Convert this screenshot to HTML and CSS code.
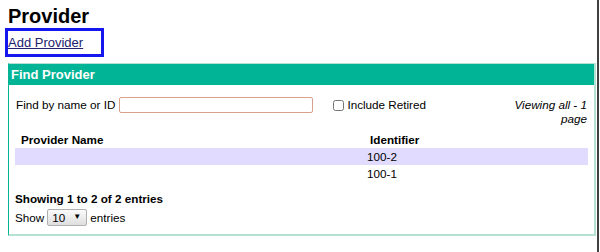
FILE: index.html
```html
<!DOCTYPE html>
<html lang="en">
<head>
    <meta charset="UTF-8">
    <title>Manage Providers</title>
    <link rel="stylesheet" href="styles.css">
</head>
<body>
    <h1>Provider</h1>
    <a class="add-link" href="#">Add Provider</a>

    <div class="box">
        <div class="box-header">Find Provider</div>
        <div class="box-body">
            <div class="search-row">
                <label for="inputNode">Find by name or ID</label>
                <input type="text" id="inputNode" class="search-input">
                <label class="retired"><input type="checkbox" class="check"> Include Retired</label>
                <div class="viewing">Viewing all - 1 page</div>
            </div>

            <table class="results">
                <thead>
                    <tr>
                        <th class="col-name">Provider Name</th>
                        <th>Identifier</th>
                    </tr>
                </thead>
                <tbody>
                    <tr class="odd">
                        <td></td>
                        <td>100-2</td>
                    </tr>
                    <tr>
                        <td></td>
                        <td>100-1</td>
                    </tr>
                </tbody>
            </table>

            <div class="info">Showing 1 to 2 of 2 entries</div>
            <div class="length">
                Show
                <span class="select-wrap">
                    <select class="length-select">
                        <option>10</option>
                        <option>25</option>
                        <option>50</option>
                    </select>
                </span>
                entries
            </div>
        </div>
    </div>
</body>
</html>
```

FILE: styles.css
```css
/* Page */
html {
    background: #fff;
}

body {
    font-family: "Liberation Sans", Arial, sans-serif;
    font-size: 13px;
    color: #000;
    margin: 0 1px 0 0;
    padding: 5px 0 0 8px;
    min-height: 100vh;
    box-sizing: border-box;
    border-right: 2px solid #404040;
}

h1 {
    font-size: 20px;
    line-height: 23px;
    margin: 0 0 3px 0;
}

/* Link with focus ring */
.add-link {
    display: inline-block;
    line-height: 23px;
    padding-right: 18px;
    color: #22226e;
    outline: 3px solid #1616ee;
}

/* Box */
.box {
    width: 588px;
    box-sizing: border-box;
    margin-top: 9px;
    border-top: 1px solid #b6e0d3;
    border-left: 1px solid #00b495;
    border-right: 2px solid #b6e0d3;
    border-bottom: 2px solid #b6e0d3;
}

.box-header {
    background-color: #00b495;
    color: #fff;
    font-weight: bold;
    line-height: 21px;
    padding-left: 2px;
}

.box-body {
    font-size: 11.7px;
    padding: 12px 6px 8px 6px;
}

/* Search row */
.search-row {
    display: flex;
    align-items: flex-start;
    padding: 0 1px;
}

.search-row label {
    line-height: 14px;
    margin-top: 1px;
}

.search-input {
    width: 194px;
    height: 16px;
    box-sizing: border-box;
    margin: 0 0 0 4px;
    border: 1px solid #d9a08c;
    border-radius: 2px;
    padding: 0 3px;
    font-size: 11.7px;
}

.retired {
    display: flex;
    align-items: center;
    margin-left: 20px;
}

.check {
    width: 11px;
    height: 11px;
    margin: 0 3px 0 0;
}

.viewing {
    margin-left: auto;
    width: 76px;
    text-align: right;
    font-style: italic;
    line-height: 14px;
    margin-top: 1px;
}

/* Table */
.results {
    width: 573px;
    border-collapse: collapse;
    margin-top: 5px;
}

.results th,
.results td {
    text-align: left;
    line-height: 15px;
    padding: 1px 3px;
}

.results th {
    padding: 1px 6px;
}

.col-name {
    width: 337px;
}

.results tr.odd {
    background-color: #e1dcff;
}

/* Footer */
.info {
    font-weight: bold;
    line-height: 15px;
    margin-top: 9px;
}

.length {
    display: flex;
    align-items: center;
    gap: 3px;
    margin-top: 3px;
    line-height: 17px;
}

.select-wrap {
    position: relative;
    display: inline-block;
}

.length-select {
    appearance: none;
    -webkit-appearance: none;
    width: 40px;
    height: 17px;
    margin: 0;
    padding: 0 0 0 4px;
    font-family: "Liberation Sans", Arial, sans-serif;
    font-size: 11.7px;
    color: #000;
    border: 1px solid #b0b0b0;
    border-radius: 2px;
    background: linear-gradient(#fbfbfb, #dedede);
}

.select-wrap::after {
    content: "\25BC";
    position: absolute;
    right: 6px;
    top: 3px;
    font-size: 8px;
    line-height: 10px;
    color: #000;
    pointer-events: none;
}
```
